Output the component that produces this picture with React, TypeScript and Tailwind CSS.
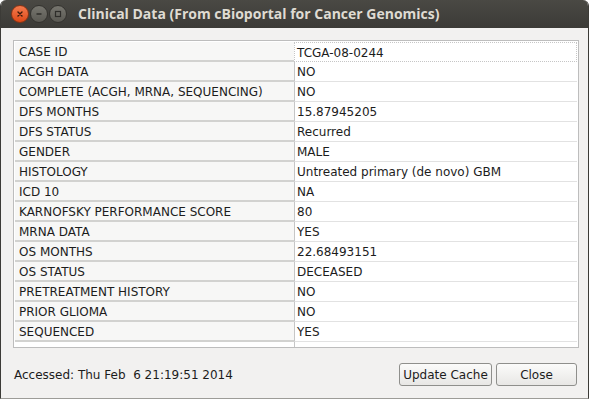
import React from 'react';

const rows: [string, string][] = [
  ['CASE ID', 'TCGA-08-0244'],
  ['ACGH DATA', 'NO'],
  ['COMPLETE (ACGH, MRNA, SEQUENCING)', 'NO'],
  ['DFS MONTHS', '15.87945205'],
  ['DFS STATUS', 'Recurred'],
  ['GENDER', 'MALE'],
  ['HISTOLOGY', 'Untreated primary (de novo) GBM'],
  ['ICD 10', 'NA'],
  ['KARNOFSKY PERFORMANCE SCORE', '80'],
  ['MRNA DATA', 'YES'],
  ['OS MONTHS', '22.68493151'],
  ['OS STATUS', 'DECEASED'],
  ['PRETREATMENT HISTORY', 'NO'],
  ['PRIOR GLIOMA', 'NO'],
  ['SEQUENCED', 'YES'],
];

function TitleButton({ kind }: { kind: 'close' | 'min' | 'max' }) {
  const isClose = kind === 'close';
  return (
    <div
      className={`w-[18px] h-[18px] rounded-full flex items-center justify-center border ${
        isClose
          ? 'bg-gradient-to-b from-[#f47a4c] to-[#dd4814] border-[#8a3415]'
          : 'bg-gradient-to-b from-[#77766f] to-[#5a5953] border-[#34332f]'
      }`}
    >
      <svg width="10" height="10" viewBox="0 0 10 10">
        {kind === 'close' && (
          <path d="M3 3 L7 7 M7 3 L3 7" stroke="#3c1a0c" strokeWidth="1.4" strokeLinecap="round" />
        )}
        {kind === 'min' && <path d="M2.5 5 H7.5" stroke="#2e2d2a" strokeWidth="1.4" />}
        {kind === 'max' && <rect x="2.5" y="2.5" width="5" height="5" fill="none" stroke="#2e2d2a" strokeWidth="1.2" />}
      </svg>
    </div>
  );
}

export default function App() {
  return (
    <div className="w-[589px] h-[399px] bg-white overflow-hidden" style={{ fontFamily: '"DejaVu Sans", sans-serif' }}>
      <div className="w-full h-full flex flex-col rounded-t-[6px] overflow-hidden border-x border-[#3c3b37] border-b border-b-[#9d9c98]">
        {/* Title bar */}
        <div className="h-[28px] shrink-0 flex items-center bg-gradient-to-b from-[#4a4944] to-[#3c3b37] pl-[10px]">
          <div className="flex items-center gap-[1px]">
            <TitleButton kind="close" />
            <TitleButton kind="min" />
            <TitleButton kind="max" />
          </div>
          <div
            className="ml-[11px] text-[14px] font-bold text-[#dfdbd2] leading-none"
            style={{ fontFamily: '"Open Sans", sans-serif' }}
          >
            Clinical Data (From cBioportal for Cancer Genomics)
          </div>
        </div>

        {/* Body */}
        <div className="flex-1 bg-[#f2f1f0] flex flex-col pl-[12px] pr-[9px]">
          <div className="mt-[12px] h-[308px] border border-[#bdbdbd] bg-white flex flex-col pt-px px-px">
            {rows.map(([k, v], i) => (
              <div key={i} className="flex h-[20px] text-[12px] text-[#1c1c1c]">
                <div className="w-[279px] shrink-0 bg-[#f7f7f6] border-b-2 border-[#d2d2d0] pl-[4px] pt-px flex items-center leading-none">
                  {k}
                </div>
                <div
                  className={`flex-1 border-l border-[#c6c6c6] pl-[2px] pt-px flex items-center leading-none ${
                    i === 0 ? 'border border-dotted border-[#8a8a8a] ml-0' : 'border-b border-b-[#e2e2e2]'
                  }`}
                >
                  {v}
                </div>
              </div>
            ))}
            <div className="flex flex-1">
              <div className="w-[279px] shrink-0" />
              <div className="flex-1 border-l border-[#c6c6c6]" />
            </div>
          </div>

          {/* Footer */}
          <div className="flex items-center justify-between mt-[15px]">
            <div className="text-[12px] text-[#1c1c1c] pl-px">Accessed: Thu Feb&nbsp;&nbsp;6 21:19:51 2014</div>
            <div className="flex gap-[4px] pr-[2px]">
              <button className="h-[23px] w-[93px] text-[12px] text-[#1c1c1c] border border-[#8f8f8c] rounded-[3px] bg-gradient-to-b from-[#fbfbfa] to-[#e8e7e5]">
                Update Cache
              </button>
              <button className="h-[23px] w-[81px] text-[12px] text-[#1c1c1c] border border-[#8f8f8c] rounded-[3px] bg-gradient-to-b from-[#fbfbfa] to-[#e8e7e5]">
                Close
              </button>
            </div>
          </div>
        </div>
      </div>
    </div>
  );
}
